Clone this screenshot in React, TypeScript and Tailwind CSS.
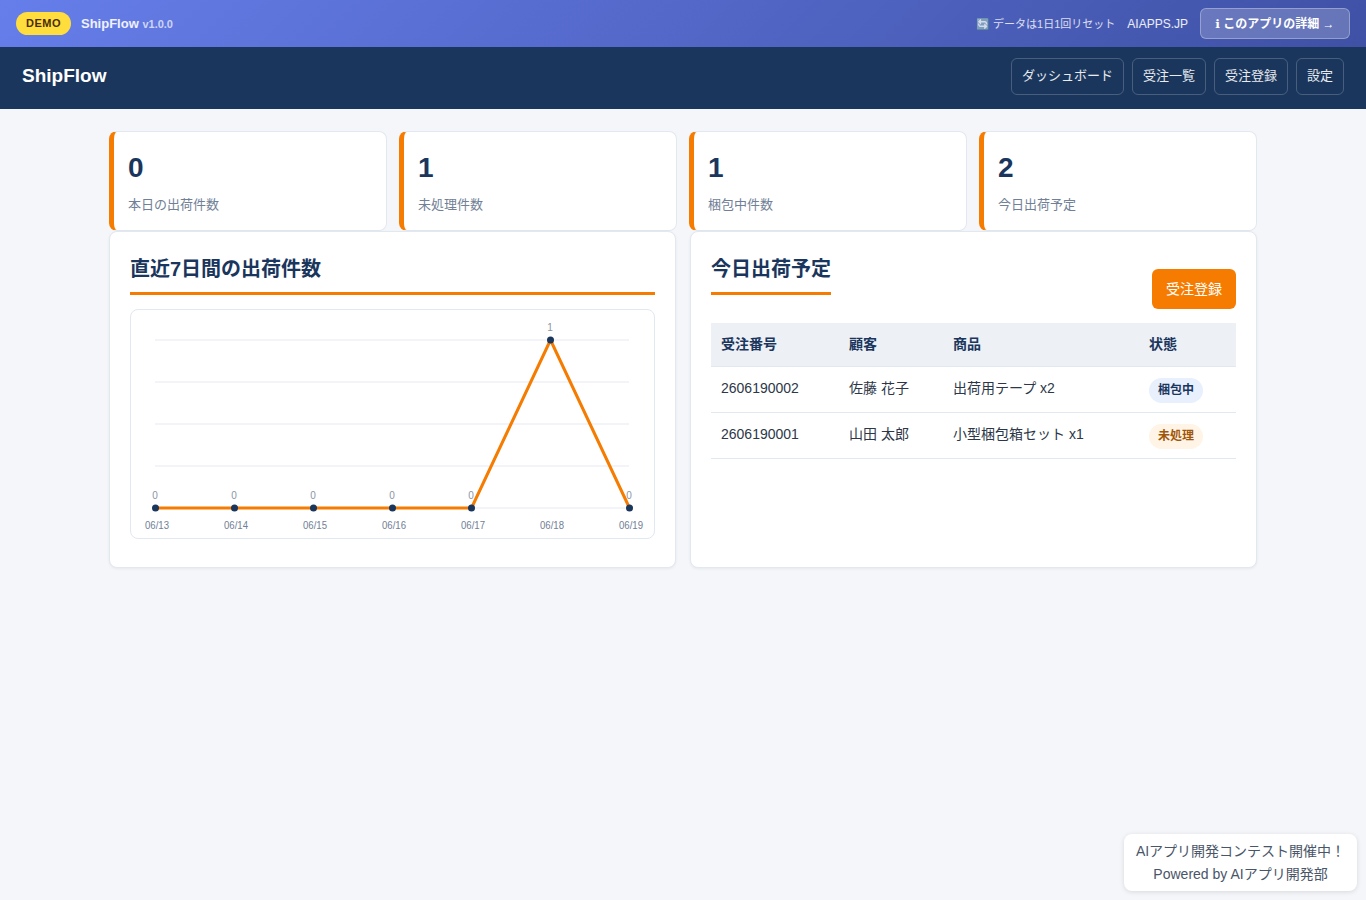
const stats = [
  { value: '0', label: '本日の出荷件数' },
  { value: '1', label: '未処理件数' },
  { value: '1', label: '梱包中件数' },
  { value: '2', label: '今日出荷予定' }
]

const navItems = ['ダッシュボード', '受注一覧', '受注登録', '設定']

const orders = [
  {
    id: '2606190002',
    customer: '佐藤 花子',
    product: '出荷用テープ x2',
    status: '梱包中',
    badge: 'bg-[#e8f0fe] text-[#1a365d]'
  },
  {
    id: '2606190001',
    customer: '山田 太郎',
    product: '小型梱包箱セット x1',
    status: '未処理',
    badge: 'bg-[#fff4e5] text-[#a0560a]'
  }
]

const chartPoints = [
  { x: 24.5, y: 198, value: '0', date: '06/13' },
  { x: 103.5, y: 198, value: '0', date: '06/14' },
  { x: 182.5, y: 198, value: '0', date: '06/15' },
  { x: 261.5, y: 198, value: '0', date: '06/16' },
  { x: 340.5, y: 198, value: '0', date: '06/17' },
  { x: 419.5, y: 30, value: '1', date: '06/18' },
  { x: 498.5, y: 198, value: '0', date: '06/19' }
]

function ShippingChart() {
  return (
    <svg width="523" height="228" viewBox="0 0 523 228" className="block">
      {[30, 72, 114, 156, 198].map((y) => (
        <line key={y} x1="24" x2="498" y1={y} y2={y} stroke="#eef0f5" strokeWidth="1.5" />
      ))}
      <polyline
        points={chartPoints.map((p) => `${p.x},${p.y}`).join(' ')}
        fill="none"
        stroke="#f57c00"
        strokeWidth="3"
        strokeLinejoin="round"
      />
      {chartPoints.map((p) => (
        <g key={p.date}>
          <circle cx={p.x} cy={p.y} r="3.5" fill="#1a365d" />
          <text x={p.x - 0.5} y={p.y - 9} textAnchor="middle" fontSize="10" fill="#8a94a6">
            {p.value}
          </text>
          <text x={p.x + 1.5} y="219" textAnchor="middle" fontSize="10" textLength="24" lengthAdjust="spacingAndGlyphs" fill="#718096">
            {p.date}
          </text>
        </g>
      ))}
    </svg>
  )
}

export default function App() {
  return (
    <div className="relative min-h-[900px] bg-[#f4f6fa] font-['Liberation_Sans','Noto_Sans_CJK_JP',sans-serif] text-[#2d3748]">
      <div className="flex h-[47px] items-center justify-between bg-[linear-gradient(135deg,#667eea,#3f51a5)] pl-4 pr-4 text-white">
        <div className="flex items-center gap-2.5">
          <span className="flex h-[23px] w-[55px] items-center justify-center rounded-full bg-[#ffdd3c] text-[11px] font-bold tracking-[0.5px] text-[#4a2c0a]">
            DEMO
          </span>
          <span className="text-[13px] font-bold text-white/90">
            ShipFlow <span className="text-[11px] font-bold text-white/70">v1.0.0</span>
          </span>
        </div>
        <div className="flex items-center">
          <span className="pt-px text-[11px] text-white/80">🔄 データは1日1回リセット</span>
          <span className="ml-3 text-xs text-white/90">AIAPPS.JP</span>
          <span className="ml-3 flex h-[31px] w-[150px] items-center justify-center rounded-md border border-white/30 bg-white/20 text-xs font-bold text-white">
            <span className="font-['DejaVu_Sans',sans-serif]">ℹ</span>&nbsp;このアプリの詳細 →
          </span>
        </div>
      </div>

      <nav className="flex h-[62px] items-center justify-between bg-[#1a365d] pb-[3px] pl-[22px] pr-[22px]">
        <span className="text-[19px] font-bold text-white">ShipFlow</span>
        <div className="flex gap-2">
          {navItems.map((item) => (
            <span
              key={item}
              className="flex h-[37px] items-center rounded-md border border-white/20 px-2.5 pb-[2px] text-[13px] text-white/90"
            >
              {item}
            </span>
          ))}
        </div>
      </nav>

      <main className="mx-auto w-[1148px] pt-[22px]">
        <div className="grid grid-cols-4 gap-3">
          {stats.map((stat) => (
            <div
              key={stat.label}
              className="h-[100px] rounded-lg border border-l-[5px] border-[#e2e8f0] border-l-[#f57c00] bg-white pl-[14px] pt-[18px]"
            >
              <div className="text-[28px] font-bold leading-[36px] text-[#1a365d]">{stat.value}</div>
              <div className="mt-[9px] text-[13px] leading-[20px] text-[#718096]">{stat.label}</div>
            </div>
          ))}
        </div>

        <div className="grid grid-cols-2 gap-[14px]">
          <section className="h-[337px] rounded-lg border border-[#e2e8f0] bg-white px-5 pt-5 shadow-[0_1px_3px_rgba(0,0,0,0.06)]">
            <h2 className="border-b-[3px] border-[#f57c00] pb-[7px] pt-px text-xl font-bold leading-[32px] text-[#1a365d]">
              直近7日間の出荷件数
            </h2>
            <div className="mt-[14px] h-[230px] rounded-lg border border-[#e2e8f0]">
              <ShippingChart />
            </div>
          </section>

          <section className="h-[337px] rounded-lg border border-[#e2e8f0] bg-white px-5 pt-5 shadow-[0_1px_3px_rgba(0,0,0,0.06)]">
            <div className="flex items-start justify-between">
              <h2 className="border-b-[3px] border-[#f57c00] pb-[7px] pt-px text-xl font-bold leading-[32px] text-[#1a365d]">
                今日出荷予定
              </h2>
              <button className="mt-[17px] h-10 w-[84px] rounded-md bg-[#f57c00] text-sm text-white">
                受注登録
              </button>
            </div>
            <table className="mt-[14px] w-full table-fixed border-collapse text-sm">
              <colgroup>
                <col className="w-[128px]" />
                <col className="w-[104px]" />
                <col className="w-[196px]" />
                <col />
              </colgroup>
              <thead>
                <tr className="h-[43px] border-b border-[#e2e8f0] bg-[#edf0f5] text-left text-[#1a365d]">
                  <th className="px-2.5 font-bold">受注番号</th>
                  <th className="px-2.5 font-bold">顧客</th>
                  <th className="px-2.5 font-bold">商品</th>
                  <th className="px-2.5 font-bold">状態</th>
                </tr>
              </thead>
              <tbody>
                {orders.map((order) => (
                  <tr key={order.id} className="h-[46px] border-b border-[#e2e8f0]">
                    <td className="px-2.5 pb-[2px]">{order.id}</td>
                    <td className="px-2.5 pb-[2px]">{order.customer}</td>
                    <td className="px-2.5 pb-[2px]">{order.product}</td>
                    <td className="px-2.5 pt-[2px]">
                      <span className={`inline-block rounded-full px-[9px] py-[5px] text-xs font-bold leading-[15px] ${order.badge}`}>
                        {order.status}
                      </span>
                    </td>
                  </tr>
                ))}
              </tbody>
            </table>
          </section>
        </div>
      </main>

      <div className="absolute bottom-[9px] right-[9px] h-[57px] w-[233px] rounded-lg bg-white py-[6px] text-center text-sm leading-[23px] text-[#4a5568] shadow-[0_1px_5px_rgba(0,0,0,0.12)]">
        <div>AIアプリ開発コンテスト開催中！</div>
        <div>Powered by AIアプリ開発部</div>
      </div>
    </div>
  )
}
